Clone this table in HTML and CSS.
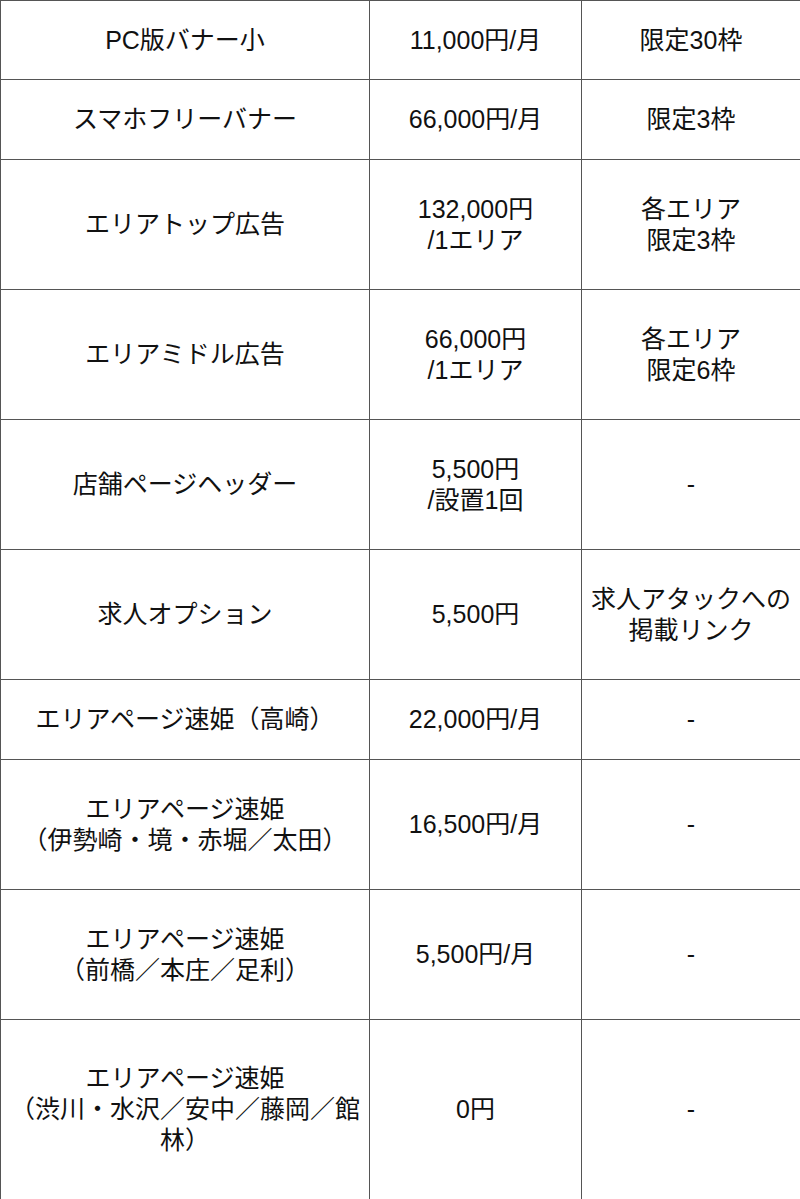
FILE: index.html
```html
<!DOCTYPE html>
<html lang="ja">
<head>
<meta charset="utf-8">
<title>料金表</title>
<link rel="stylesheet" href="styles.css">
</head>
<body>
<div class="table">
  <div class="cell">PC版バナー小</div>
  <div class="cell">11,000円/月</div>
  <div class="cell">限定30枠</div>

  <div class="cell">スマホフリーバナー</div>
  <div class="cell">66,000円/月</div>
  <div class="cell">限定3枠</div>

  <div class="cell">エリアトップ広告</div>
  <div class="cell">132,000円<br>/1エリア</div>
  <div class="cell">各エリア<br>限定3枠</div>

  <div class="cell">エリアミドル広告</div>
  <div class="cell">66,000円<br>/1エリア</div>
  <div class="cell">各エリア<br>限定6枠</div>

  <div class="cell">店舗ページヘッダー</div>
  <div class="cell">5,500円<br>/設置1回</div>
  <div class="cell">-</div>

  <div class="cell">求人オプション</div>
  <div class="cell">5,500円</div>
  <div class="cell">求人アタックへの<br>掲載リンク</div>

  <div class="cell">エリアページ速姫（高崎）</div>
  <div class="cell">22,000円/月</div>
  <div class="cell">-</div>

  <div class="cell">エリアページ速姫<br>（伊勢崎・境・赤堀／太田）</div>
  <div class="cell">16,500円/月</div>
  <div class="cell">-</div>

  <div class="cell">エリアページ速姫<br>（前橋／本庄／足利）</div>
  <div class="cell">5,500円/月</div>
  <div class="cell">-</div>

  <div class="cell">エリアページ速姫<br>（渋川・水沢／安中／藤岡／館<br>林）</div>
  <div class="cell">0円</div>
  <div class="cell">-</div>
</div>
</body>
</html>
```

FILE: styles.css
```css
html, body {
  margin: 0;
  padding: 0;
  background: #ffffff;
}

body {
  font-family: "Liberation Sans", "Noto Sans CJK JP", sans-serif;
  font-size: 25px;
  line-height: 31px;
  color: #111111;
  overflow: hidden;
}

.table {
  display: grid;
  grid-template-columns: 369px 212px 219px;
  grid-template-rows: 79px 80px 130px 130px 130px 130px 80px 130px 130px 180px;
  width: 800px;
}

.cell {
  box-sizing: border-box;
  border-top: 1px solid #555555;
  border-left: 1px solid #555555;
  display: flex;
  align-items: center;
  justify-content: center;
  text-align: center;
  padding: 0 4px;
  white-space: nowrap;
}
```
